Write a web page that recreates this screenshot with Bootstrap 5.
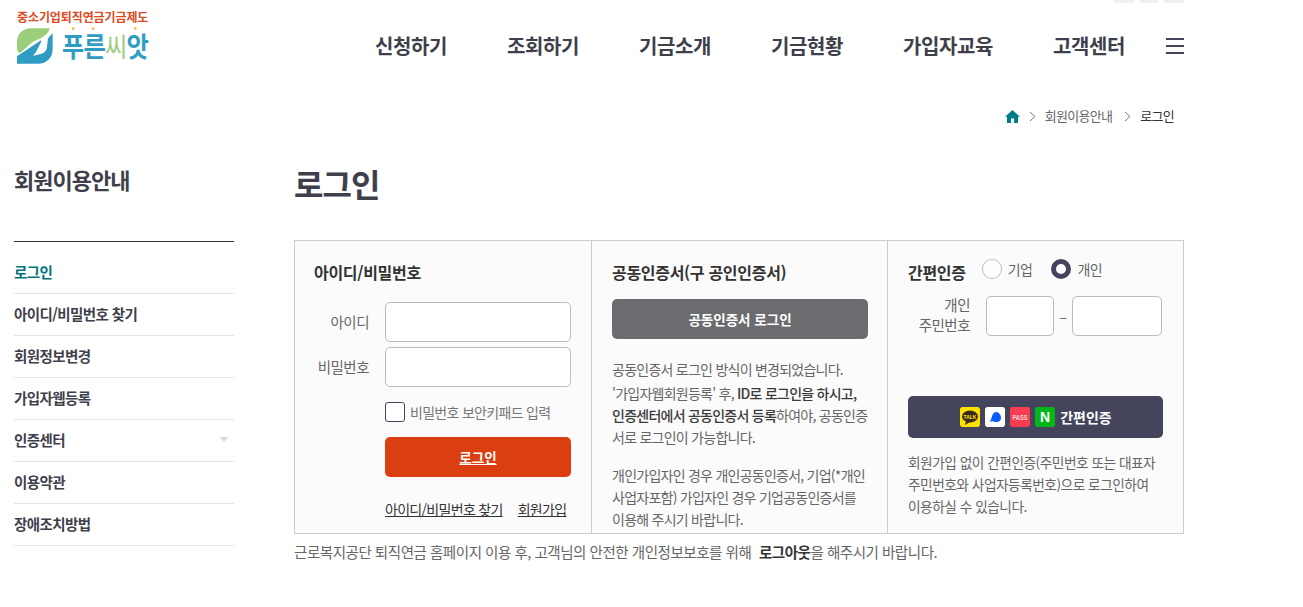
<!DOCTYPE html>
<html lang="ko">
<head>
  <meta charset="UTF-8" />
  <meta name="viewport" content="width=device-width, initial-scale=1.0" />
  <title>로그인</title>
  <link href="https://cdn.jsdelivr.net/npm/bootstrap@5.3.3/dist/css/bootstrap.min.css" rel="stylesheet">
  <style>
    body { font-family: "Noto Sans CJK KR", "Noto Sans", sans-serif; color: #666; background: #fff; width: 1303px; overflow: hidden; font-size: 14px; letter-spacing: -0.5px; }
    .top-chips { height: 3px; padding-right: 119px; gap: 5px; }
    .top-chips i { width: 20px; height: 3px; background: #f0f0f0; border-radius: 0 0 5px 5px; }
    .site-head { height: 77px; padding-left: 17px; padding-right: 119px; }
    .logo-box { width: 140px; margin-top: 6px; }
    .logo-top { font-size: 12px; line-height: 16px; color: #dc4a22; font-weight: 700; letter-spacing: -0.1px; white-space: nowrap; }
    .logo-row { height: 40px; margin-top: 1px; }
    .logo-word { position: relative; display: block; font-size: 27px; line-height: 38px; font-weight: 700; color: #2f9cc4; letter-spacing: -1px; margin-left: 9px; white-space: nowrap; transform: scaleX(.9); transform-origin: left center; }
    .logo-word em { font-style: normal; color: #9ccf7c; font-weight: 400; }
    .logo-spark { position: absolute; top: 0; width: 3px; height: 3px; border-radius: 50%; background: #f7c04a; }
    .spark-a { left: 11px; }
    .spark-b { left: 33px; }
    .spark-c { left: 80px; }
    .main-nav { gap: 60px; margin-top: 8px; }
    .main-nav a { font-size: 20px; font-weight: 700; color: #3f3f4c; text-decoration: none; letter-spacing: -0.4px; white-space: nowrap; }
    .burger { width: 18px; margin-left: 41px; margin-top: 8px; gap: 5px; }
    .burger i { height: 2px; background: #44455c; }
    .crumbs { height: 34px; padding-right: 129px; margin-top: 19px; font-size: 13px; color: #666; gap: 9px; letter-spacing: -0.7px; }
    .crumbs span { margin-right: 3px; }
    .crumbs b { font-weight: 400; color: #333; }
    .page-wrap { padding-left: 14px; margin-top: 17px; }
    .side-col { width: 220px; margin-right: 60px; }
    .side-title { font-size: 22px; font-weight: 700; color: #3f3f4c; line-height: 32px; height: 92px; padding-top: 13px; letter-spacing: -1px; border-bottom: 1px solid #333; margin: 0; }
    .side-menu a { display: flex; align-items: center; justify-content: space-between; height: 42px; padding-bottom: 2px; border-bottom: 1px solid #e4e4e4; font-size: 14.5px; font-weight: 700; color: #3f3f4c; text-decoration: none; letter-spacing: -0.6px; }
    .side-menu a.on { color: #00737c; height: 52px; padding-top: 10px; }
    .side-caret { width: 0; height: 0; border-left: 5px solid transparent; border-right: 5px solid transparent; border-top: 5px solid #ddd; margin-right: 5px; }
    .main-col { width: 890px; }
    .page-title { font-size: 32px; font-weight: 700; color: #3f3f4c; line-height: 46px; height: 90px; margin: 0; padding-top: 10px; letter-spacing: -1px; }
    .login-box { border: 1px solid #ccc; background: #fbfbfc; height: 294px; }
    .login-part { padding: 18px 19px 0; border-right: 1px solid #ccc; }
    .part-a { width: 297px; }
    .part-b { width: 296px; padding-right: 18px; padding-left: 20px; }
    .part-c { flex: 1; border-right: 0; padding-left: 20px; padding-right: 20px; }
    .part-title { font-size: 16px; font-weight: 700; color: #333; line-height: 26px; margin: 0; white-space: nowrap; letter-spacing: -0.3px; }
    .part-a .part-title { margin-bottom: 17px; }
    .field-row { margin-bottom: 5px; }
    .field-label { width: 71px; text-align: right; padding-right: 16px; font-size: 14.5px; white-space: nowrap; }
    .field-input { width: 186px; height: 40px; border: 1px solid #bbb; border-radius: 5px; background: #fff; padding: 0 8px; }
    .key-check { padding-left: 71px; height: 20px; margin-top: 15px; gap: 5px; font-size: 14px; color: #777; white-space: nowrap; letter-spacing: -0.7px; }
    .check-square { width: 20px; height: 20px; border: 1px solid #44455c; border-radius: 3px; background: #fff; flex: none; }
    .login-btn { margin-left: 71px; width: 186px; height: 40px; margin-top: 15px; background: #db3e11; color: #fff; border: 0; border-radius: 5px; font-size: 13.5px; font-weight: 700; text-decoration: underline; display: block; padding: 0; }
    .login-btn:hover { background: #db3e11; color: #fff; }
    .find-links { padding-left: 71px; margin-top: 22px; gap: 15px; font-size: 14px; line-height: 20px; white-space: nowrap; letter-spacing: -0.7px; }
    .find-links a { color: #333; }
    .cert-btn { display: block; width: 256px; height: 40px; margin-top: 14px; background: #6b6b70; color: #fff; border: 0; border-radius: 5px; font-size: 13.5px; font-weight: 700; padding: 0; }
    .cert-btn:hover { background: #6b6b70; color: #fff; }
    .cert-text { font-size: 14px; line-height: 22px; margin: 0; color: #666; letter-spacing: -0.75px; }
    .cert-text b { font-weight: 500; color: #3a3a3a; }
    .mt-first { margin-top: 19px; }
    .mt-mid { margin-top: 2px; }
    .mt-last { margin-top: 16px; }
    .simple-head { height: 26px; }
    .radio-line { gap: 19px; margin-left: 16px; margin-bottom: 6px; font-size: 14px; }
    .radio-dot { width: 20px; height: 20px; border-radius: 50%; border: 1px solid #bbb; background: #fff; flex: none; margin-right: 6px; }
    .radio-dot.on { border: 5px solid #44455c; }
    .jumin-row { margin-top: 11px; height: 40px; }
    .jumin-label { width: 62px; text-align: right; font-size: 14.5px; line-height: 20px; white-space: nowrap; margin-bottom: 2px; }
    .jumin-a { width: 68px; height: 40px; margin-left: 16px; border: 1px solid #bbb; border-radius: 5px; background: #fff; padding: 0 6px; }
    .jumin-b { width: 90px; height: 40px; border: 1px solid #bbb; border-radius: 5px; background: #fff; padding: 0 6px; }
    .jumin-dash { width: 18px; text-align: center; }
    .simple-btn { width: 255px; height: 42px; margin-top: 60px; background: #44455c; color: #fff; border: 0; border-radius: 5px; font-size: 14px; font-weight: 700; gap: 5px; padding: 0 0 0 1px; }
    .simple-btn:hover { background: #44455c; color: #fff; }
    .app-ico { width: 20px; height: 20px; border-radius: 2px; display: block; flex: none; }
    .simple-text { font-size: 13.7px; line-height: 22px; margin: 13px 0 0; }
    .logout-note { font-size: 14.55px; line-height: 22px; margin: 7px 0 0; white-space: nowrap; }
    .logout-note b { font-weight: 700; color: #333; margin-left: 4px; }
  </style>
</head>
<body>
  <div class="top-chips d-flex justify-content-end"><i></i><i></i><i></i></div>

  <header class="site-head d-flex justify-content-between align-items-center">
    <a class="logo-box d-block text-decoration-none align-self-start" href="#">
      <div class="logo-top">중소기업퇴직연금기금제도</div>
      <div class="logo-row d-flex align-items-center">
        <svg width="38" height="38" viewBox="0 0 38 38" class="flex-none">
          <path d="M35 0H15C6 0 0 6 0 14v8c0 3 2 5 4 4l11-10c5-4 9-4 13-7 3-2 6-5 7-9z" fill="#9ccf7c"/>
          <path d="M38 5c-2 3-4 4-5 6l-1 9c0 3-2 5-5 7l-8 2c-3 1-1-1 1-3l6-12c0-1-1-1-2 0L0 30v8h22c10 0 16-7 16-15z" fill="#2f9cc4"/>
        </svg>
        <span class="logo-word">푸른<em>씨</em>앗<i class="logo-spark spark-a"></i><i class="logo-spark spark-b"></i><i class="logo-spark spark-c"></i></span>
      </div>
    </a>
    <div class="d-flex align-items-center">
      <nav class="main-nav d-flex">
        <a href="#">신청하기</a>
        <a href="#">조회하기</a>
        <a href="#">기금소개</a>
        <a href="#">기금현황</a>
        <a href="#">가입자교육</a>
        <a href="#">고객센터</a>
      </nav>
      <div class="burger d-flex flex-column"><i></i><i></i><i></i></div>
    </div>
  </header>

  <div class="crumbs d-flex justify-content-end align-items-center">
    <svg width="15" height="13" viewBox="0 0 15 13"><path d="M7.5 0L15 6.8h-2V13H9V8.5H6V13H2V6.8H0z" fill="#007c86"/></svg>
    <svg width="7" height="11" viewBox="0 0 7 11"><path d="M1 1l5 4.500-5 4.500" fill="none" stroke="#777"/></svg>
    <span>회원이용안내</span>
    <svg width="7" height="11" viewBox="0 0 7 11"><path d="M1 1l5 4.500-5 4.500" fill="none" stroke="#777"/></svg>
    <b>로그인</b>
  </div>

  <div class="page-wrap d-flex">
    <aside class="side-col">
      <h2 class="side-title">회원이용안내</h2>
      <div class="side-menu">
        <a href="#" class="on">로그인</a>
        <a href="#">아이디/비밀번호 찾기</a>
        <a href="#">회원정보변경</a>
        <a href="#">가입자웹등록</a>
        <a href="#">인증센터<span class="side-caret"></span></a>
        <a href="#">이용약관</a>
        <a href="#">장애조치방법</a>
      </div>
    </aside>

    <main class="main-col">
      <h1 class="page-title">로그인</h1>
      <div class="login-box d-flex">
        <section class="login-part part-a">
          <h3 class="part-title">아이디/비밀번호</h3>
          <div class="field-row d-flex align-items-center">
            <label class="field-label" for="uid">아이디</label>
            <input id="uid" class="field-input" type="text">
          </div>
          <div class="field-row d-flex align-items-center">
            <label class="field-label" for="upw">비밀번호</label>
            <input id="upw" class="field-input" type="password">
          </div>
          <div class="key-check d-flex align-items-center"><span class="check-square"></span>비밀번호 보안키패드 입력</div>
          <button type="button" class="btn login-btn">로그인</button>
          <div class="find-links d-flex">
            <a href="#">아이디/비밀번호 찾기</a>
            <a href="#">회원가입</a>
          </div>
        </section>

        <section class="login-part part-b">
          <h3 class="part-title">공동인증서(구 공인인증서)</h3>
          <button type="button" class="btn cert-btn">공동인증서 로그인</button>
          <p class="cert-text mt-first">공동인증서 로그인 방식이 변경되었습니다.</p>
          <p class="cert-text mt-mid">'가입자웹회원등록' 후, <b>ID로 로그인을 하시고,<br>인증센터에서 공동인증서 등록</b>하여야, 공동인증<br>서로 로그인이 가능합니다.</p>
          <p class="cert-text mt-last">개인가입자인 경우 개인공동인증서, 기업(*개인<br>사업자포함) 가입자인 경우 기업공동인증서를<br>이용해 주시기 바랍니다.</p>
        </section>

        <section class="login-part part-c">
          <div class="simple-head d-flex align-items-center">
            <h3 class="part-title">간편인증</h3>
            <div class="radio-line d-flex align-items-center">
              <span class="d-flex align-items-center"><span class="radio-dot"></span>기업</span>
              <span class="d-flex align-items-center"><span class="radio-dot on"></span>개인</span>
            </div>
          </div>
          <div class="jumin-row d-flex align-items-center">
            <div class="jumin-label">개인<br>주민번호</div>
            <input class="jumin-a" type="text" aria-label="주민번호 앞자리">
            <span class="jumin-dash">–</span>
            <input class="jumin-b" type="password" aria-label="주민번호 뒷자리">
          </div>
          <button type="button" class="btn simple-btn d-flex align-items-center justify-content-center">
            <svg class="app-ico" viewBox="0 0 20 20"><rect width="20" height="20" rx="2" fill="#ffe100"/><ellipse cx="10" cy="9.500" rx="8" ry="6" fill="#3c2a1e"/><path d="M6 14l-1 4 5-3z" fill="#3c2a1e"/><text x="10" y="11.500" font-size="5" font-weight="700" text-anchor="middle" fill="#ffe100" font-family="Liberation Sans">TALK</text></svg>
            <svg class="app-ico" viewBox="0 0 20 20"><rect width="20" height="20" rx="2" fill="#fff"/><path d="M11 5a5.500 5.500 0 0 1 5 6c0 2-1.500 3.500-3.500 4-2 .3-3 0-4-.5-1-.4-2.500 0-4 .5 1-1 1.500-2.500 2-4 .8-3 2-6 4.500-6z" fill="#0b5cff"/></svg>
            <svg class="app-ico" viewBox="0 0 20 20"><rect width="20" height="20" rx="2" fill="#f93c50"/><text x="10" y="13" font-size="7" font-weight="700" text-anchor="middle" fill="#ffd9dd" font-family="Liberation Sans" textLength="15" lengthAdjust="spacingAndGlyphs">PASS</text></svg>
            <svg class="app-ico" viewBox="0 0 20 20"><rect width="20" height="20" rx="2" fill="#03b71b"/><text x="10" y="15" font-size="14" font-weight="700" text-anchor="middle" fill="#fff" font-family="Liberation Sans">N</text></svg>
            <span>간편인증</span>
          </button>
          <p class="simple-text">회원가입 없이 간편인증(주민번호 또는 대표자<br>주민번호와 사업자등록번호)으로 로그인하여<br>이용하실 수 있습니다.</p>
        </section>
      </div>
      <p class="logout-note">근로복지공단 퇴직연금 홈페이지 이용 후, 고객님의 안전한 개인정보보호를 위해 <b>로그아웃</b>을 해주시기 바랍니다.</p>
    </main>
  </div>
</body>
</html>
